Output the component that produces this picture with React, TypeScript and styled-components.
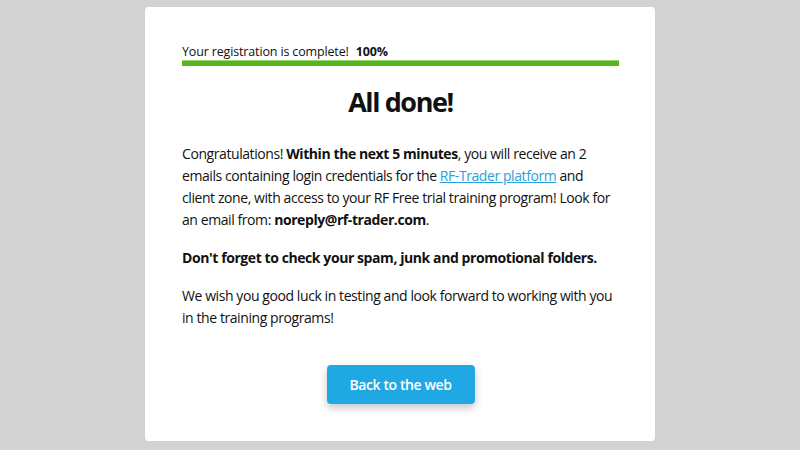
import React from 'react';
import styled, { createGlobalStyle } from 'styled-components';

const GlobalStyle = createGlobalStyle`
  html, body {
    margin: 0;
    padding: 0;
    background: #d2d2d2;
  }
  body {
    font-family: "Open Sans", "Liberation Sans", sans-serif;
    color: #111;
  }
`;

const Page = styled.div`
  display: flex;
  justify-content: center;
  padding-top: 7px;
  min-height: 450px;
  box-sizing: border-box;
`;

const Card = styled.div`
  width: 510px;
  height: 434px;
  box-sizing: border-box;
  background: #fff;
  border-radius: 4px;
  padding: 36px 36px 0 37px;
`;

const ProgressLabel = styled.div`
  font-size: 12.5px;
  line-height: 17px;
  letter-spacing: -0.15px;
  color: #111;

  strong {
    font-weight: 700;
    margin-left: 4px;
  }
`;

const ProgressTrack = styled.div`
  height: 6px;
  background: #56b51c;
  border-top: 1px solid #9ed67a;
  box-sizing: border-box;
`;

const Title = styled.h1`
  margin: 18px 0 23px;
  text-align: center;
  font-size: 27px;
  line-height: 36px;
  letter-spacing: -1.4px;
  font-weight: 700;
  color: #111;
`;

const Paragraph = styled.p<{ $bold?: boolean }>`
  margin: 0 0 16px;
  font-size: 14px;
  line-height: 22px;
  letter-spacing: -0.42px;
  font-weight: ${p => (p.$bold ? 700 : 400)};
  color: #111;
`;

const Link = styled.a`
  color: #2aa0d8;
  text-decoration: underline;
`;

const Actions = styled.div`
  display: flex;
  justify-content: center;
  margin-top: 36px;
`;

const Button = styled.button`
  width: 148px;
  height: 39px;
  border: none;
  border-radius: 4px;
  background: #1fa8e4;
  color: #fff;
  font-family: "Open Sans", "Liberation Sans", sans-serif;
  font-size: 14px;
  letter-spacing: -0.4px;
  font-weight: 600;
  box-shadow: 0 4px 8px rgba(0, 0, 0, 0.22);
  cursor: pointer;
`;

export default function App() {
  return (
    <Page>
      <GlobalStyle />
      <Card>
        <ProgressLabel>
          Your registration is complete! <strong>100%</strong>
        </ProgressLabel>
        <ProgressTrack />
        <Title>All done!</Title>
        <Paragraph>
          Congratulations! <b>Within the next 5 minutes</b>, you will receive an 2 emails
          containing login credentials for the <Link href="#">RF-Trader platform</Link> and
          client zone, with access to your RF Free trial training program! Look for an email
          from: <b>noreply@rf-trader.com</b>.
        </Paragraph>
        <Paragraph $bold>Don't forget to check your spam, junk and promotional folders.</Paragraph>
        <Paragraph>
          We wish you good luck in testing and look forward to working with you in the training
          programs!
        </Paragraph>
        <Actions>
          <Button>Back to the web</Button>
        </Actions>
      </Card>
    </Page>
  );
}
